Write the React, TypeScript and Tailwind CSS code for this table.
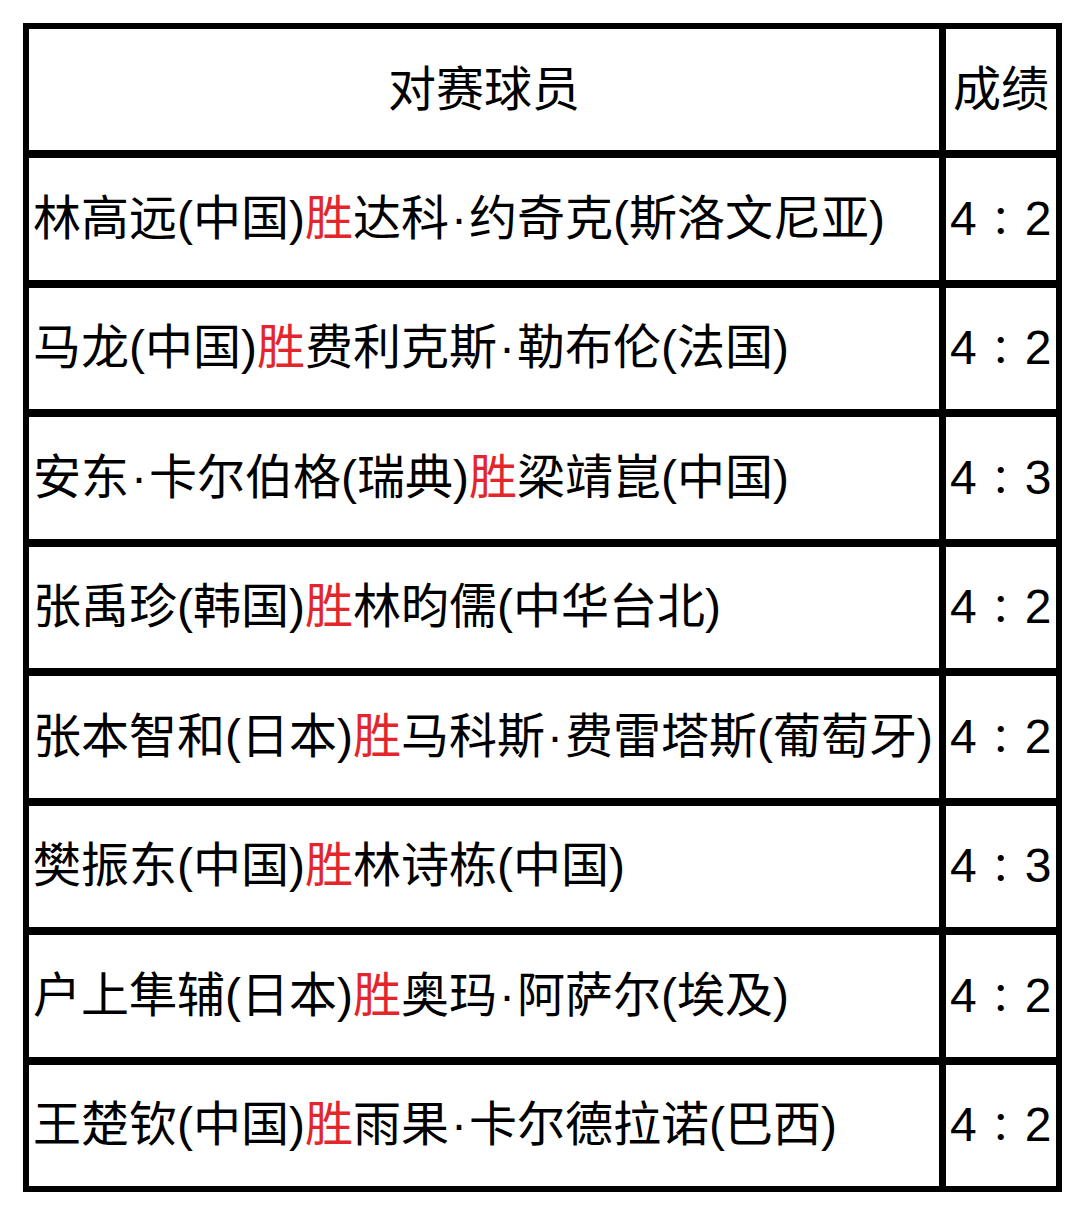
const ROWS = [
  { a: "林高远(中国)", b: "达科·约奇克(斯洛文尼亚)", score: [4, 2] },
  { a: "马龙(中国)", b: "费利克斯·勒布伦(法国)", score: [4, 2] },
  { a: "安东·卡尔伯格(瑞典)", b: "梁靖崑(中国)", score: [4, 3] },
  { a: "张禹珍(韩国)", b: "林昀儒(中华台北)", score: [4, 2] },
  { a: "张本智和(日本)", b: "马科斯·费雷塔斯(葡萄牙)", score: [4, 2] },
  { a: "樊振东(中国)", b: "林诗栋(中国)", score: [4, 3] },
  { a: "户上隼辅(日本)", b: "奥玛·阿萨尔(埃及)", score: [4, 2] },
  { a: "王楚钦(中国)", b: "雨果·卡尔德拉诺(巴西)", score: [4, 2] },
]

// names like 达科·约奇克 get a wider middle dot, as in the picture
function Name({ text }: { text: string }) {
  const parts = text.split("·")
  return (
    <>
      {parts.map((p, i) => (
        <span key={i}>
          {i > 0 && <span className="inline-block w-[20px] text-center">·</span>}
          {p}
        </span>
      ))}
    </>
  )
}

export default function App() {
  return (
    <div
      className="min-h-[1215px] w-[1080px] bg-white pt-[23px] pl-[23px] text-[48px] leading-none text-black"
      style={{ fontFamily: '"Liberation Sans", "Noto Sans CJK SC", sans-serif' }}
    >
      <div className="w-[1039px] border-[6px] border-black">
        <div className="flex h-[121px]">
          <div className="flex w-[910px] items-center justify-center">对赛球员</div>
          <div className="flex w-[117px] items-center justify-center border-l-[7px] border-black">
            成绩
          </div>
        </div>
        {ROWS.map((r) => (
          <div key={r.a} className="flex h-[129.5px] border-t-[8px] border-black">
            <div className="flex w-[910px] items-center whitespace-nowrap pl-[4px]">
              <Name text={r.a} />
              <span className="text-[#e3262b]">胜</span>
              <Name text={r.b} />
            </div>
            <div className="flex w-[117px] items-center whitespace-nowrap border-l-[7px] border-black pl-[4px]">
              {r.score[0]}
              <span
                className="inline-block w-[48px] text-center text-[40px]"
                style={{ fontFamily: '"Noto Sans CJK JP", sans-serif' }}
              >
                ：
              </span>
              {r.score[1]}
            </div>
          </div>
        ))}
      </div>
    </div>
  )
}
